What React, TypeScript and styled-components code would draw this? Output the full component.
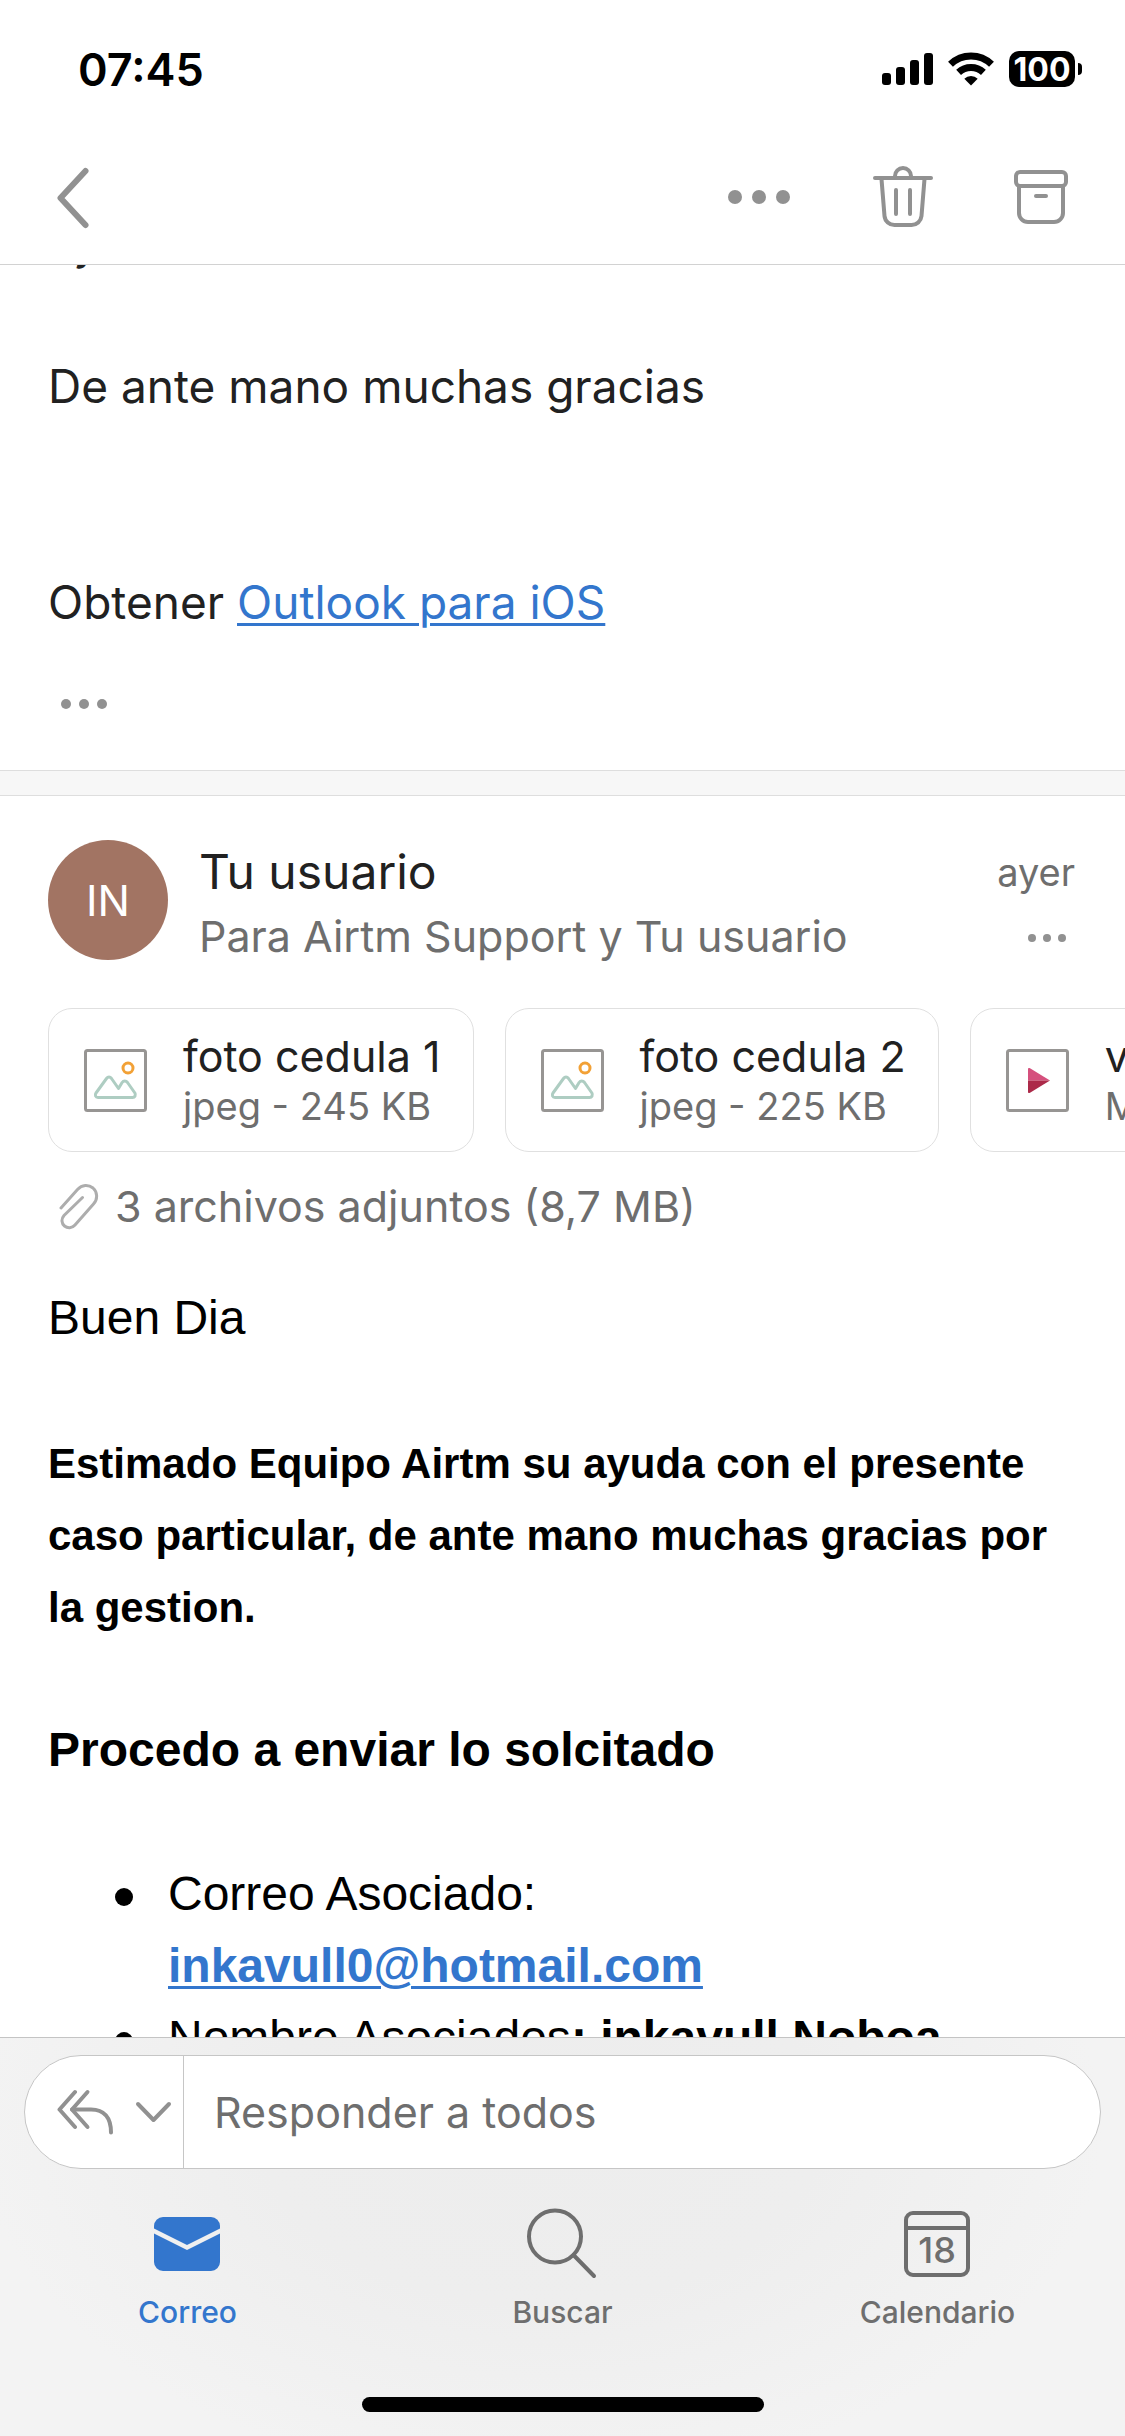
import React, { useLayoutEffect, useRef } from "react";
import styled, { createGlobalStyle } from "styled-components";

const ui = `Inter, "Noto Sans", sans-serif`;
const serifless = `"Liberation Sans", Arial, sans-serif`;
const grey = "#919191";
const textGrey = "#6e6e6e";
const ink = "#212121";
const blue = "#3376cd";

const GlobalStyle = createGlobalStyle`
  *, *::before, *::after { box-sizing: border-box; }
  html, body { margin: 0; background: #fff; }
  button { border: 0; padding: 0; background: none; font: inherit; color: inherit; cursor: pointer; }
  p, ul, h1, h2 { margin: 0; padding: 0; font-weight: 400; }
  svg { display: block; flex: none; }
`;

const Screen = styled.div`
  display: flex;
  flex-direction: column;
  height: 100vh;
  background: #fff;
  color: ${ink};
  font-family: ${ui};
`;

const TopArea = styled.header`
  flex: none;
  border-bottom: 1px solid #d2d2d2;
`;

const StatusBar = styled.div`
  display: flex;
  align-items: center;
  justify-content: space-between;
  height: 132px;
  padding: 6px 43px 0 78px;
  color: #000;
`;

const Clock = styled.time`
  font-size: 45px;
  font-weight: 600;
`;

const StatusIcons = styled.div`
  display: flex;
  align-items: center;
  gap: 15px;
`;

const Battery = styled.div`
  display: flex;
  align-items: center;
  gap: 3px;
`;

const BatteryBody = styled.span`
  display: flex;
  align-items: center;
  justify-content: center;
  width: 66px;
  height: 36px;
  border-radius: 10px;
  background: #000;
  color: #fff;
  font-size: 32px;
  font-weight: 700;
`;

const BatteryTip = styled.span`
  width: 4px;
  height: 12px;
  border-radius: 0 4px 4px 0;
  background: #000;
`;

const Toolbar = styled.nav`
  display: flex;
  align-items: center;
  justify-content: space-between;
  height: 132px;
  padding: 0 48px 0 36px;
  color: ${grey};
`;

const Actions = styled.div`
  display: flex;
  gap: 69px;
`;

const Thread = styled.main`
  flex: 1;
  min-height: 0;
  overflow-y: auto;
  scrollbar-width: none;
`;

const PreviousMessage = styled.article`
  padding: 0 48px;
  border-bottom: 1px solid #dedede;
  font-size: 46px;
  line-height: 72px;
`;

const Blank = styled.br``;

const MailLink = styled.a`
  color: ${blue};
  text-decoration: underline;
  text-decoration-thickness: 3px;
  text-underline-offset: 4px;
`;

const QuotedToggle = styled.button`
  display: flex;
  align-items: center;
  height: 132px;
  color: ${grey};
`;

const Separator = styled.div`
  height: 25px;
  border-bottom: 1px solid #dedede;
  background: #f7f7f7;
`;

const Message = styled.article`
  padding-top: 44px;
`;

const MessageHeader = styled.header`
  display: grid;
  grid-template-columns: 120px 1fr auto;
  column-gap: 31px;
  padding: 0 50px 0 48px;
`;

const Avatar = styled.div`
  display: flex;
  align-items: center;
  justify-content: center;
  width: 120px;
  height: 120px;
  border-radius: 50%;
  background: #a27463;
  color: #fff;
  font-size: 43px;
`;

const Sender = styled.h1`
  font-size: 48px;
  line-height: 64px;
`;

const Recipients = styled.p`
  color: ${textGrey};
  font-size: 43px;
  line-height: 64px;
`;

const Meta = styled.div`
  display: flex;
  flex-direction: column;
  align-items: flex-end;
  height: 128px;
  color: ${textGrey};
  font-size: 38px;
  line-height: 64px;
`;

const MetaButton = styled.button`
  color: ${grey};
`;

const Attachments = styled.div`
  display: flex;
  gap: 31px;
  margin-top: 40px;
  padding: 0 48px;
  overflow-x: auto;
  scrollbar-width: none;
`;

const Attachment = styled.button`
  display: flex;
  flex: none;
  align-items: center;
  gap: 36px;
  height: 144px;
  padding: 0 32px 0 35px;
  border: 1px solid #e0e0e0;
  border-radius: 24px;
  text-align: left;
`;

const FileText = styled.span`
  display: flex;
  flex-direction: column;
`;

const FileName = styled.span`
  color: ${ink};
  font-size: 43px;
  line-height: 52px;
`;

const FileInfo = styled.span`
  color: ${textGrey};
  font-size: 38px;
  line-height: 48px;
`;

const AttachmentSummary = styled.p`
  display: flex;
  align-items: center;
  gap: 15px;
  margin-top: 18px;
  padding: 0 48px 0 59px;
  color: ${textGrey};
  font-size: 43px;
  line-height: 72px;
`;

const Body = styled.div`
  padding: 40px 48px 0;
  color: #000;
  font-family: ${serifless};
  font-size: 48px;
  line-height: 72px;
`;

const Paragraph = styled.p`
  margin-bottom: 72px;
`;

const SmallStrong = styled.strong`
  font-size: 42px;
  line-height: 1;
`;

const List = styled.ul`
  list-style: none;
`;

const Item = styled.li`
  display: flex;
  gap: 35px;
  padding-left: 67px;

  &::before {
    content: "";
    flex: none;
    width: 18px;
    height: 18px;
    margin-top: 30px;
    border-radius: 50%;
    background: #000;
  }
`;

const Footer = styled.footer`
  flex: none;
  padding: 17px 24px 24px;
  border-top: 1px solid #c4c4c4;
  background: radial-gradient(ellipse 50% 90% at 48% 22%, #ededed 0%, #eeeeee 50%, #f3f3f3 100%);
`;

const ReplyBar = styled.form`
  display: flex;
  height: 114px;
  border: 1px solid #c6c6c6;
  border-radius: 57px;
  background: #fff;
  overflow: hidden;
`;

const ReplyMode = styled.button`
  display: flex;
  align-items: center;
  gap: 21px;
  padding: 0 11px 0 32px;
  border-right: 1px solid #c6c6c6;
  color: ${grey};
`;

const ReplyInput = styled.input`
  flex: 1;
  min-width: 0;
  padding: 0 30px;
  border: 0;
  outline: 0;
  background: none;
  color: ${ink};
  font-family: ${ui};
  font-size: 43px;

  &::placeholder {
    color: ${textGrey};
    opacity: 1;
  }
`;

const Tabs = styled.nav`
  display: grid;
  grid-template-columns: repeat(3, 1fr);
  margin: 39px -24px 67px;
`;

const Tab = styled.button<{ $active?: boolean }>`
  display: flex;
  flex-direction: column;
  align-items: center;
  gap: 14px;
  color: ${(p) => (p.$active ? blue : textGrey)};
  font-size: 30px;
  font-weight: 500;
  line-height: 36px;
`;

const HomeIndicator = styled.div`
  width: 402px;
  height: 15px;
  margin: 0 auto;
  border-radius: 8px;
  background: #000;
`;

const Dots = ({ width, height = 72, r, step, cy = 36 }: { width: number; height?: number; r: number; step: number; cy?: number }) => (
  <svg width={width} height={height} viewBox={`0 0 ${width} ${height}`} fill="currentColor" aria-hidden="true">
    <circle cx={width / 2 - step} cy={cy} r={r} />
    <circle cx={width / 2} cy={cy} r={r} />
    <circle cx={width / 2 + step} cy={cy} r={r} />
  </svg>
);

const SignalIcon = () => (
  <svg width="51" height="34" viewBox="0 0 51 34" aria-hidden="true">
    <rect x="0" y="21" width="9" height="12" rx="3" />
    <rect x="14" y="15" width="9" height="18" rx="3" />
    <rect x="28" y="8" width="9" height="25" rx="3" />
    <rect x="42" y="1" width="9" height="32" rx="3" />
  </svg>
);

const WifiIcon = () => (
  <svg width="46" height="34" viewBox="0 0 46 34" aria-hidden="true">
    <g fill="none" stroke="#000" strokeWidth="7">
      <path d="M2.500 12.300a29.500 29.500 0 0 1 41 0" />
      <path d="M10.600 20.400a18 18 0 0 1 24.800 0" />
    </g>
    <path d="M23 33.500l-6.700-6.800a9.800 9.800 0 0 1 13.400 0z" />
  </svg>
);

const BackIcon = () => (
  <svg width="72" height="72" viewBox="0 0 72 72" fill="none" stroke="currentColor" strokeWidth="6" strokeLinecap="round" strokeLinejoin="round" aria-hidden="true">
    <path d="M49.500 9L24.500 36l25 27" />
  </svg>
);

const TrashIcon = () => (
  <svg width="72" height="72" viewBox="0 0 72 72" fill="none" stroke="currentColor" strokeWidth="4" strokeLinecap="round" aria-hidden="true">
    <path d="M11 16h56" />
    <path d="M31 15v-1a8 8 0 0 1 16 0v1" />
    <path d="M17.500 17l3 37a10 10 0 0 0 10 9h17a10 10 0 0 0 10-9l3-37" />
    <path d="M32 28v24M46 28v24" />
  </svg>
);

const ArchiveIcon = () => (
  <svg width="72" height="72" viewBox="0 0 72 72" fill="none" stroke="currentColor" strokeWidth="4" strokeLinecap="round" aria-hidden="true">
    <rect x="11" y="10" width="50" height="14" rx="4" />
    <path d="M14 24v27a9 9 0 0 0 9 9h26a9 9 0 0 0 9-9V24" />
    <path d="M31 34h10" />
  </svg>
);

const ImageIcon = () => (
  <svg width="63" height="63" viewBox="0 0 63 63" fill="none" strokeWidth="3" aria-hidden="true">
    <rect x="1.500" y="1.500" width="60" height="60" rx="2" stroke="#979593" />
    <circle cx="44" cy="19" r="5" stroke="#f2a136" />
    <path d="M14 48.500h34.500c2.500 0 3.500-2.500 2.400-4.500L43.500 33.500c-1.500-2-4-2-5.400 0L34.500 39.500l-7-10c-1.500-2-3.500-2-5 0L12 44c-1.400 2-.5 4.500 2 4.500z" stroke="#aecdc2" strokeLinejoin="round" />
  </svg>
);

const VideoIcon = () => (
  <svg width="63" height="63" viewBox="0 0 63 63" aria-hidden="true">
    <rect x="1.500" y="1.500" width="60" height="60" rx="2" fill="none" stroke="#979593" strokeWidth="3" />
    <path d="M22 20c0-1 1-1.400 2-.800L44 31.500H22z" fill="#d5507d" />
    <path d="M22 31.500h22L24 43.800c-1 .6-2 .2-2-.800z" fill="#ac2a49" />
  </svg>
);

const ClipIcon = () => (
  <svg width="41" height="48" viewBox="0 0 41 48" fill="none" stroke="#adadad" strokeWidth="3" strokeLinecap="round" aria-hidden="true">
    <path d="M2 26L18.500 7.500c4.500-5 11-5 15.500-1.500 4.500 4 5 11 .5 16L16 43c-3 3.500-7.500 3.500-10.500 1s-3.500-7-.5-10.500L23.500 15.500" />
  </svg>
);

const ReplyAllIcon = () => (
  <svg width="57" height="48" viewBox="0 0 57 48" fill="none" stroke="currentColor" strokeWidth="4" strokeLinecap="round" strokeLinejoin="round" aria-hidden="true">
    <path d="M18 4L2.500 21.500 18 39" />
    <path d="M30.500 4L15 21.500l15.500 17.500" />
    <path d="M15 21.500h19c13 0 20 8 20 23" />
  </svg>
);

const DownIcon = () => (
  <svg width="37" height="24" viewBox="0 0 37 24" fill="none" stroke="currentColor" strokeWidth="4" strokeLinecap="round" strokeLinejoin="round" aria-hidden="true">
    <path d="M3 4l15.500 16L34 4" />
  </svg>
);

const MailIcon = () => (
  <svg width="72" height="72" viewBox="1 0 72 72" aria-hidden="true">
    <path fill="currentColor" d="M3 20.500V18a9 9 0 0 1 9-9h48a9 9 0 0 1 9 9v2.500L36 37z" />
    <path fill="currentColor" d="M3 25.500L36 42l33-16.500V54a9 9 0 0 1-9 9H12a9 9 0 0 1-9-9z" />
  </svg>
);

const SearchIcon = () => (
  <svg width="72" height="72" viewBox="1 0 72 72" fill="none" stroke="currentColor" strokeWidth="4" strokeLinecap="round" aria-hidden="true">
    <circle cx="29" cy="28.500" r="26" />
    <path d="M47.500 47L68 68" />
  </svg>
);

const CalendarIcon = () => (
  <svg width="72" height="72" viewBox="1 0 72 72" fill="none" stroke="currentColor" strokeWidth="4" aria-hidden="true">
    <rect x="5" y="5" width="62" height="62" rx="7" />
    <path d="M5 20h62" />
    <text x="36" y="55" textAnchor="middle" fill="currentColor" stroke="none" fontFamily="Inter, sans-serif" fontSize="36" fontWeight="500">
      18
    </text>
  </svg>
);

const files = [
  { name: "foto cedula 1", info: "jpeg - 245 KB", Icon: ImageIcon },
  { name: "foto cedula 2", info: "jpeg - 225 KB", Icon: ImageIcon },
  { name: "video cedula", info: "MP4 - 8,2 MB", Icon: VideoIcon },
];

export default function App() {
  const thread = useRef<HTMLElement>(null);

  useLayoutEffect(() => {
    if (thread.current) thread.current.scrollTop = 59;
  }, []);

  return (
    <Screen>
      <GlobalStyle />
      <TopArea>
        <StatusBar>
          <Clock>07:45</Clock>
          <StatusIcons>
            <SignalIcon />
            <WifiIcon />
            <Battery>
              <BatteryBody>100</BatteryBody>
              <BatteryTip />
            </Battery>
          </StatusIcons>
        </StatusBar>
        <Toolbar>
          <button type="button" aria-label="Atrás"><BackIcon /></button>
          <Actions>
            <button type="button" aria-label="Más acciones"><Dots width={72} r={7} step={24} cy={35} /></button>
            <button type="button" aria-label="Eliminar"><TrashIcon /></button>
            <button type="button" aria-label="Archivar"><ArchiveIcon /></button>
          </Actions>
        </Toolbar>
      </TopArea>

      <Thread ref={thread}>
        <PreviousMessage>
          <p>ayuda</p>
          <Blank />
          <p>De ante mano muchas gracias</p>
          <Blank />
          <Blank />
          <p>Obtener <MailLink href="#outlook">Outlook para iOS</MailLink></p>
          <QuotedToggle type="button" aria-label="Mostrar texto citado"><Dots width={72} r={5} step={18} /></QuotedToggle>
        </PreviousMessage>
        <Separator />

        <Message>
          <MessageHeader>
            <Avatar>IN</Avatar>
            <div>
              <Sender>Tu usuario</Sender>
              <Recipients>Para Airtm Support y Tu usuario</Recipients>
            </div>
            <Meta>
              <span>ayer</span>
              <MetaButton type="button" aria-label="Opciones del mensaje"><Dots width={56} height={64} r={4} step={15} cy={34} /></MetaButton>
            </Meta>
          </MessageHeader>

          <Attachments>
            {files.map(({ name, info, Icon }) => (
              <Attachment key={name} type="button">
                <Icon />
                <FileText>
                  <FileName>{name}</FileName>
                  <FileInfo>{info}</FileInfo>
                </FileText>
              </Attachment>
            ))}
          </Attachments>
          <AttachmentSummary><ClipIcon />3 archivos adjuntos (8,7 MB)</AttachmentSummary>

          <Body>
            <Paragraph>Buen Dia</Paragraph>
            <Paragraph>
              <SmallStrong>
                Estimado Equipo Airtm su ayuda con el presente caso particular, de ante mano muchas gracias por la gestion.
              </SmallStrong>
            </Paragraph>
            <Paragraph><strong>Procedo a enviar lo solcitado</strong></Paragraph>
            <List>
              <Item>
                <span>
                  Correo Asociado: <strong><MailLink href="mailto:inkavull0@hotmail.com">inkavull0@hotmail.com</MailLink></strong>
                </span>
              </Item>
              <Item>
                <span>Nombre Asociados<strong>: inkavull Noboa</strong></span>
              </Item>
            </List>
          </Body>
        </Message>
      </Thread>

      <Footer>
        <ReplyBar>
          <ReplyMode type="button" aria-label="Modo de respuesta">
            <ReplyAllIcon />
            <DownIcon />
          </ReplyMode>
          <ReplyInput type="text" aria-label="Responder a todos" placeholder="Responder a todos" />
        </ReplyBar>
        <Tabs>
          <Tab type="button" $active><MailIcon />Correo</Tab>
          <Tab type="button"><SearchIcon />Buscar</Tab>
          <Tab type="button"><CalendarIcon />Calendario</Tab>
        </Tabs>
        <HomeIndicator />
      </Footer>
    </Screen>
  );
}
